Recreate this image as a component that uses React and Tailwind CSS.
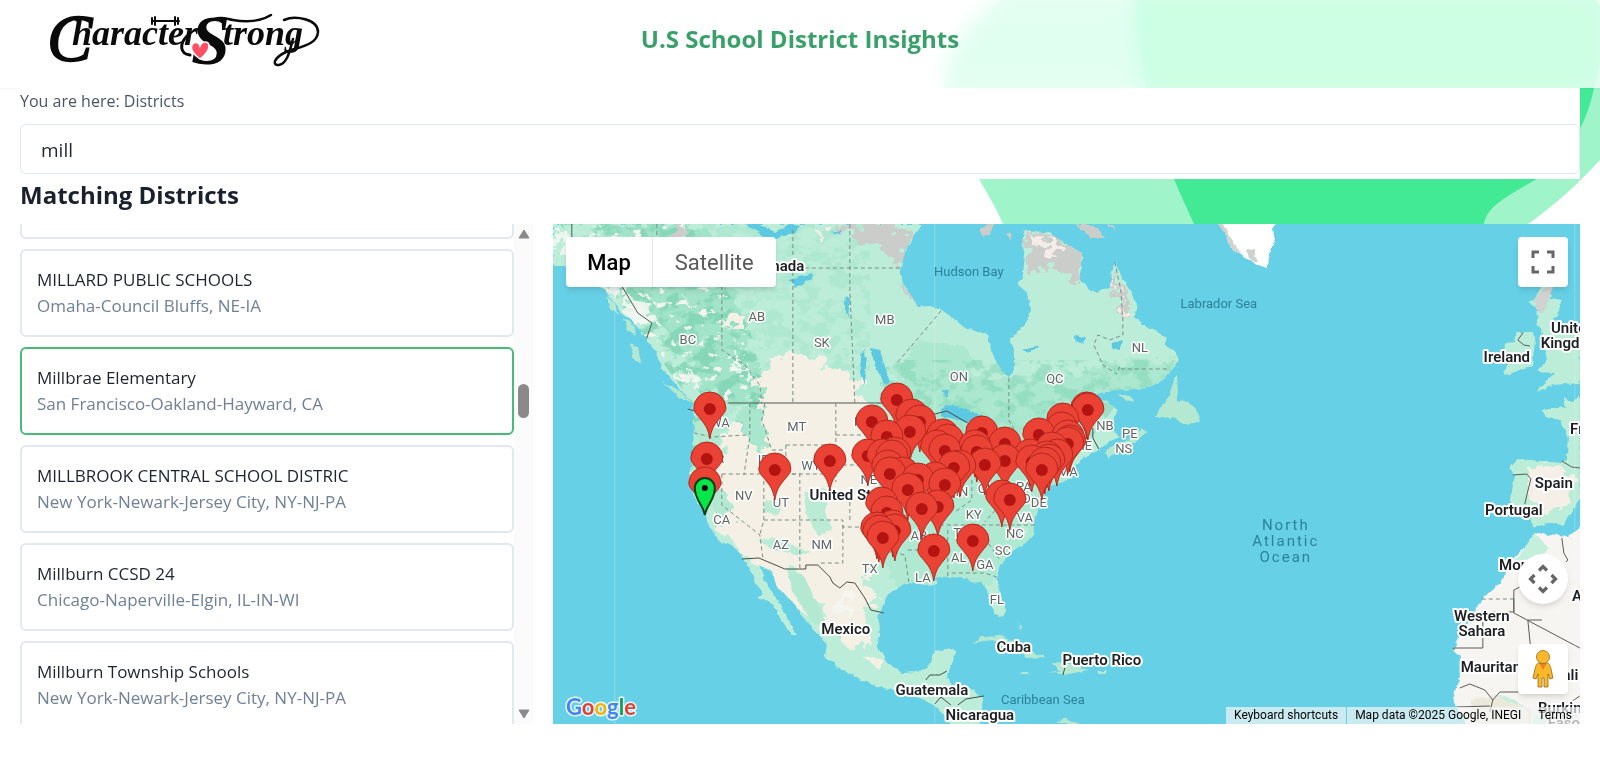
import React from "react";

const districts = [
  { name: "MILLARD PUBLIC SCHOOLS", area: "Omaha-Council Bluffs, NE-IA" },
  { name: "Millbrae Elementary", area: "San Francisco-Oakland-Hayward, CA", selected: true },
  { name: "MILLBROOK CENTRAL SCHOOL DISTRIC", area: "New York-Newark-Jersey City, NY-NJ-PA" },
  { name: "Millburn CCSD 24", area: "Chicago-Naperville-Elgin, IL-IN-WI" },
  { name: "Millburn Township Schools", area: "New York-Newark-Jersey City, NY-NJ-PA" },
];

/* Pin positions: centre of the pin's head. */
const pins = [
  [710, 408], [707, 458], [705, 483], [775, 469], [830, 460],
  [897, 399], [912, 415], [920, 421], [872, 421], [910, 431], [887, 436], [868, 455],
  [943, 435], [948, 440], [937, 446], [945, 450], [982, 432], [1005, 443], [975, 446],
  [977, 451], [1005, 460], [985, 464], [954, 467], [960, 466], [945, 484], [935, 478],
  [883, 455], [892, 456], [895, 453], [888, 466], [903, 473], [890, 473], [918, 479],
  [908, 489], [938, 506], [922, 508], [882, 503], [887, 512], [877, 528], [879, 531],
  [895, 530], [893, 526], [883, 537], [934, 550], [973, 540], [1002, 496], [1010, 499],
  [1087, 408], [1088, 409], [1063, 419], [1062, 428], [1039, 434], [1068, 436], [1070, 441],
  [1068, 443], [1052, 448], [1057, 455], [1030, 455], [1032, 461], [1047, 457], [1049, 460],
  [1045, 463], [1042, 469],
].sort((a, b) => a[1] - b[1]);

const states = [
  ["AB", 757, 316], ["BC", 688, 339], ["MB", 885, 319], ["SK", 822, 342], ["ON", 959, 376],
  ["QC", 1055, 378], ["NL", 1140, 347], ["NB", 1105, 425], ["PE", 1130, 433], ["NS", 1124, 448],
  ["MT", 797, 426], ["WA", 720, 422], ["OR", 716, 458], ["ID", 764, 459], ["WY", 811, 465],
  ["NV", 744, 495], ["UT", 781, 502], ["CA", 722, 519], ["AZ", 781, 544], ["NM", 822, 544],
  ["TX", 870, 568], ["ND", 863, 421], ["NE", 869, 479], ["KY", 974, 514], ["TN", 962, 532],
  ["NC", 1015, 533], ["VA", 1025, 517], ["SC", 1003, 550], ["AL", 959, 557], ["GA", 985, 564],
  ["LA", 923, 577], ["FL", 997, 599], ["DE", 1039, 502], ["AR", 919, 535], ["PA", 1024, 486],
  ["MD", 1021, 498], ["MA", 1068, 471], ["ME", 1083, 445], ["IN", 962, 491], ["OH", 987, 488],
];

const countries = [
  ["Canada", 779, 266], ["United States", 855, 495], ["Mexico", 846, 629], ["Guatemala", 932, 690],
  ["Nicaragua", 980, 715], ["Cuba", 1014, 647], ["Puerto Rico", 1102, 660], ["Ireland", 1507, 357],
  ["United", 1573, 328], ["Kingdom", 1571, 343], ["France", 1593, 429], ["Spain", 1554, 483],
  ["Portugal", 1514, 510], ["Morocco", 1529, 565], ["Western", 1482, 616], ["Sahara", 1482, 631],
  ["Algeria", 1596, 596], ["Mauritania", 1497, 667], ["Mali", 1564, 675], ["Burkina", 1564, 708],
  ["Faso", 1564, 723],
];

const seas = [["Hudson Bay", 969, 271], ["Labrador Sea", 1219, 303], ["Caribbean Sea", 1043, 699]];

const northAmerica =
  "M553 224V266L565 266L600 287L608 293L614 303L622 312L632 320L642 333L650 343L655 352L662 368L672 380L682 391L693 404L694 417L694 437L693 453L690 473L690 487L697 500L705 515L710 527L718 540L732 545L742 555L750 570L758 587L763 593L758 598L772 603L780 618L792 635L797 635L793 627L787 618L780 603L773 593L765 580L759 565L772 570L777 587L788 597L797 607L803 617L817 633L827 645L825 657L840 668L857 678L877 687L900 691L920 698L937 707L950 723L955 730H980L982 710L983 698L970 688L950 685L947 677L952 663L958 650L955 648L937 650L932 657L928 668L917 672L903 673L887 663L878 647L880 627L878 617L883 607L887 595L903 585L910 582L925 585L937 584L935 578L950 577L967 578L972 582L982 583L987 590L990 603L995 613L1000 618L1005 617L1005 605L1000 590L997 577L1000 565L1013 550L1027 542L1035 533L1033 525L1038 510L1043 500L1048 487L1063 482L1073 477L1077 465L1083 458L1100 448L1113 440L1120 437L1110 427L1118 410L1108 402L1100 400L1086 402L1082 406L1090 396L1100 393L1120 390L1147 388L1160 382L1172 370L1178 360L1177 352L1165 345L1167 337L1148 328L1135 317L1137 303L1130 290L1123 280L1119 270L1115 262L1112 273L1110 287L1095 292L1088 287L1080 280L1082 253L1063 242L1050 233L1025 230L1022 238L1025 257L1023 275L1018 285L1026 291L1030 300L1030 317L1018 333L1010 338L1015 353L1015 370L1008 378L997 363L990 347L988 335L967 328L942 310L930 306L918 307L913 298L903 283L900 270L907 247L920 228L922 224Z";
const islands =
  "M1105 453L1108 459L1120 450L1133 443L1147 433L1143 427L1130 440L1115 444ZM1177 375L1168 397L1155 417L1173 418L1190 425L1200 422L1198 413L1190 402L1177 400L1178 390ZM1117 394L1130 396L1136 402L1124 400ZM973 643L983 637L1000 636L1017 643L1033 652L1047 657L1027 658L1020 650L997 640L983 641ZM1047 671L1060 672L1053 662L1070 663L1088 670L1065 675ZM1020 673L1026 671L1032 673L1026 675ZM1097 671L1107 671L1106 674L1098 674ZM1018 620L1023 628L1021 630ZM1057 724L1065 717L1070 720L1080 724ZM630 344L638 347L642 366L634 358ZM606 295L614 303L618 316L610 308ZM624 318L634 326L636 335L628 330ZM663 382L678 389L692 403L680 398Z";
const arcticIslands =
  "M1075 224L1092 238L1105 238L1098 228L1088 224ZM980 230L988 224H994L990 234L983 236ZM1006 234L1011 232L1010 240ZM1108 224L1117 232L1113 224Z";
const europe =
  "M1505 343L1515 342L1517 332L1533 332L1535 343L1532 367L1505 375L1503 370L1510 363L1505 357ZM1542 286L1553 286L1550 298L1562 300L1557 317L1550 323L1566 326L1580 333V383L1553 385L1537 392L1547 380L1555 373L1538 372L1547 360L1545 347L1542 333L1537 323L1538 310L1530 303L1535 298ZM1580 395L1573 402L1563 397L1565 407L1542 410L1545 416L1560 420L1568 437L1567 460L1562 463L1517 459L1510 467L1515 477L1510 500L1514 514L1530 517L1533 527L1553 523L1563 525L1573 510L1580 500Z";
const africa =
  "M1590 527L1580 527L1568 537L1547 535L1535 532L1530 542L1520 552L1507 565L1505 578L1483 598L1470 620L1460 636L1453 650L1460 657L1460 677L1453 697L1457 707L1470 730H1590Z";

const pinPath = "M0 30C-1.500 20 -4.500 16 -8.500 11C-12.500 6 -16 3 -16 -1A16 16 0 0 1 16 -1C16 3 12.500 6 8.500 11C4.500 16 1.500 20 0 30Z";

function Logo() {
  return (
    <svg viewBox="0 0 280 64" className="h-16 w-[280px] overflow-visible" role="img" aria-label="Character Strong">
      <g fill="#0a0a0a" fontFamily="'Liberation Serif', serif" fontStyle="italic" fontWeight="700">
        <text x="2" y="54" fontSize="68" fontWeight="400" stroke="#0a0a0a" strokeWidth="1.500">C</text>
        <text x="27" y="38" fontSize="36">haracter</text>
        <text x="146" y="57" fontSize="70">S</text>
        <text x="178" y="38" fontSize="36">trong</text>
      </g>
      <g fill="none" stroke="#0a0a0a" strokeLinecap="round">
        <path d="M107 14H134" strokeWidth="2" />
        <path d="M107 11V17M110 10V18M130 10V18M133 11V17" strokeWidth="2" />
        <path d="M170 12C176 9 182 12 188 13C204 16 216 14 226 8" strokeWidth="2.500" />
        <path d="M239 13C250 8 273 12 273 25C272 39 252 40 241 45C228 51 227 59 234 58C243 56 245 42 248 32" strokeWidth="2.500" />
        <path d="M142 29C134 37 135 47 145 48" strokeWidth="3" />
      </g>
      <path d="M155 52C148 47 145 42 147 38C149 34 154 35 155 39C157 34 163 34 164 38C165 43 160 48 155 52Z" fill="#ff4f64" stroke="#fff" strokeWidth="1.500" />
    </svg>
  );
}

function Backdrop() {
  return (
    <svg viewBox="0 0 700 300" className="absolute top-0 right-0 h-[300px] w-[700px]" aria-hidden="true">
      <path d="M150 -20C80 0 45 40 44 88C47 120 66 155 79 179C90 198 98 212 103 224L120 300H560C590 270 600 250 628 224C655 205 680 182 700 160V-20Z" fill="#9ff4ca" />
      <path d="M236 -20C232 40 245 92 274 179C280 194 288 210 294 224L310 300H570L584 224C587 208 600 200 637 179C660 165 686 130 694 88C698 70 700 66 700 60V6L680 -20Z" fill="#43ea95" />
    </svg>
  );
}

function MapDrawing() {
  return (
    <svg viewBox="553 224 1027 500" preserveAspectRatio="xMidYMid slice" className="absolute inset-0 h-full w-full" role="img" aria-label="Map of matching districts">
      <defs>
        <filter id="ragged" x="-5%" y="-5%" width="110%" height="110%">
          <feTurbulence type="fractalNoise" baseFrequency="0.15" numOctaves="2" seed="4" result="n" />
          <feDisplacementMap in="SourceGraphic" in2="n" scale="5" xChannelSelector="R" yChannelSelector="G" />
        </filter>
        <filter id="torn" x="-5%" y="-5%" width="110%" height="110%">
          <feTurbulence type="fractalNoise" baseFrequency="0.07 0.09" numOctaves="3" seed="9" result="n" />
          <feDisplacementMap in="SourceGraphic" in2="n" scale="34" xChannelSelector="R" yChannelSelector="G" />
        </filter>
        <filter id="forest" x="0" y="0" width="100%" height="100%" colorInterpolationFilters="sRGB">
          <feTurbulence type="fractalNoise" baseFrequency="0.06 0.08" numOctaves="4" seed="21" />
          <feColorMatrix values="0 0 0 0 0.5  0 0 0 0 0.83  0 0 0 0 0.71  8 0 0 0 -3.8" result="c" />
          <feComposite in="c" in2="SourceGraphic" operator="in" />
        </filter>
        <filter id="clearing" x="0" y="0" width="100%" height="100%" colorInterpolationFilters="sRGB">
          <feTurbulence type="fractalNoise" baseFrequency="0.09 0.12" numOctaves="4" seed="5" />
          <feColorMatrix values="0 0 0 0 0.96  0 0 0 0 0.96  0 0 0 0 0.94  12 0 0 0 -7.6" result="c" />
          <feComposite in="c" in2="SourceGraphic" operator="in" />
        </filter>
        <clipPath id="land"><path d={northAmerica} /></clipPath>
        <clipPath id="landEurope"><path d={europe} /></clipPath>
      </defs>
      <rect x="553" y="224" width="1027" height="500" fill="#66d0e6" />
      <g filter="url(#ragged)">
        <path d={northAmerica} fill="#bbedd8" />
        <path d={islands} fill="#b4e8d0" />
        <path d={arcticIslands} fill="#cbcdca" />
        <path d={europe} fill="#bbedd8" />
        <path d={africa} fill="#f7f5f2" />
        <path d="M1218 220L1225 233L1230 248L1240 253L1253 263L1267 268L1268 257L1275 240L1273 228L1278 220Z" fill="#ffffff" />
        <path d="M1218 224L1225 233L1230 248L1240 253L1238 247L1231 238L1224 224ZM1246 251L1253 249L1258 262L1252 262Z" fill="#cfd3cf" />
      </g>
      <g clipPath="url(#land)">
        <path d="M600 224H700L735 300L762 380L765 402H725L690 370L655 320Z" fill="#8fdcbd" opacity=".55" filter="url(#torn)" />
        <path d="M560 224H690L750 330L768 403L770 470L735 440L690 480V400L640 330Z" fill="#bbedd8" opacity=".8" filter="url(#forest)" />
        <path d="M690 224H870V370H760L740 320Z" fill="#bbedd8" opacity=".22" filter="url(#forest)" />
        <path d="M560 224H700L760 380V400H700L640 330Z" fill="#bbedd8" filter="url(#clearing)" />
        <path d="M895 380L920 335L965 350L985 380H1010L1100 370L1178 358V390L1100 400L1060 420L960 440L900 420Z" fill="#9fe4c8" opacity=".55" filter="url(#torn)" />
        <path d="M880 360H1178V400H1120L1090 440H880Z" fill="#bbedd8" opacity=".5" filter="url(#forest)" />
        <path d="M870 420L1090 410L1060 480L1000 580L890 590Z" fill="#a9e6ce" opacity=".6" filter="url(#torn)" />
        <path d="M765 370L790 350L850 375L868 405L876 420L875 500L888 545L868 580L880 606L855 612L868 650L850 645L825 625L800 570L772 575L740 552L712 515L716 470L735 415L748 445L772 440L758 405Z" fill="#f4f0e5" filter="url(#torn)" />
        <path d="M735 500L765 500L830 505L860 520L870 560L850 580L825 575L800 566L755 562L738 548L722 525Z" fill="#f4f0e5" />
        <path d="M764 565L785 565L798 600L815 620L806 615L780 590ZM850 600L862 605L872 645L856 632ZM862 655L884 660L880 670Z" fill="#f4f0e5" filter="url(#ragged)" />
        <path d="M788 570L804 575L815 600L828 628L812 622L792 590Z" fill="#b3e9d1" filter="url(#ragged)" />
        <path d="M700 402H735L715 470L735 520L728 525L702 500L690 470Z" fill="#b3e9d1" filter="url(#torn)" />
        <path d="M805 492L830 488L825 512L832 530L818 535L806 515ZM758 540L775 538L810 552L800 556L770 548ZM765 500L782 505L778 516L764 512Z" fill="#b9ebd5" filter="url(#ragged)" />
        <path d="M735 410L760 405L770 430L765 450L752 448L745 430Z" fill="#a9e6ce" filter="url(#torn)" />
        <path d="M722 318L745 314L744 328L728 328Z" fill="#f4f0e5" filter="url(#torn)" />
        <path d="M830 224H875L908 228L915 245L902 268L896 262L875 245L850 238ZM1022 228L1065 240L1085 253L1082 282L1070 275L1050 265L1030 272ZM1112 262L1122 282L1132 305L1124 318L1115 300L1111 282ZM670 224H695L690 238H676ZM903 282L914 296L914 306L904 292Z" fill="#cbcdca" filter="url(#torn)" />
        <path d="M1028 235L1046 238L1066 252L1050 254L1036 248ZM815 224L826 228L822 236ZM1113 275L1118 286L1115 292ZM1122 296L1128 312L1121 312Z" fill="#f4ece6" filter="url(#torn)" />
        <path d="M553 240L580 262L600 285L616 294L622 320L645 325L654 320L648 308L630 300L618 286L590 250L553 232ZM675 370L700 378L702 390L682 382ZM732 356L748 372L760 385L750 380L734 366ZM684 290L694 302L688 300ZM840 595L850 605L845 618L838 608Z" fill="#f6f7f4" opacity=".85" filter="url(#torn)" />
        <path d="M745 224L770 240L795 233L800 226L790 224L775 232L760 224ZM790 280L812 273L812 278L795 288ZM870 348L880 350L890 382L886 385L876 368ZM862 350L867 358L864 384L860 372ZM846 296L850 300L848 318L845 308ZM830 232L842 230L840 234ZM1075 335L1086 337L1083 345L1076 342ZM1112 343L1122 340L1120 350L1112 348ZM940 408L950 404L965 408L985 418L968 422L942 416ZM920 415L936 418L935 424ZM1022 350L1040 346L1030 352ZM942 390L950 391L946 398ZM990 460L1012 458L1010 464L995 466Z" fill="#5cc8e2" filter="url(#ragged)" />
      </g>
      <g clipPath="url(#landEurope)">
        <path d="M1528 468L1560 464L1575 478L1568 500L1550 512L1530 500Z" fill="#f4f0e8" filter="url(#torn)" />
        <path d="M1534 298L1548 286L1554 288L1544 312L1536 312Z" fill="#d0d3cf" filter="url(#ragged)" />
      </g>
      <path d="M1535 533L1549 548L1545 553L1525 560L1510 566L1522 552ZM1498 696L1516 700L1530 710L1560 706L1578 712V724H1500Z" fill="#c4efdc" filter="url(#ragged)" />
      <path d="M1470 700L1495 696L1540 712L1530 724H1475Z" fill="#ebe9dc" filter="url(#ragged)" />
      <g fill="none" stroke="#6f7f79" strokeWidth="1">
        <path d="M572 224V250M728 403H877M622 286L638 313L652 323L647 338M688 409L695 411" stroke="#4c5a56" />
        <path d="M877 403H905L935 414L947 411L968 423M1093 428L1093 438L1099 449" stroke="#3f4d4a" />
        <path d="M742 559L759 558L785 569H806V565H818L830 577L833 583L840 588L847 582L855 583L865 598L871 610L884 613" stroke="#4c4c48" />
        <path d="M926 680L930 675H940L947 671M935 704L941 697L951 705M958 705L966 699L984 696M1065 668L1063 675" stroke="#3f4d4a" />
        <path d="M1523 333L1518 340L1524 345L1530 346M1513 475L1527 474L1531 479L1527 495L1525 504M1562 461L1572 467L1580 468M1562 538L1564 553L1568 560L1566 562M1514 598V613L1580 648M1528 620H1542M1528 620L1531 650M1454 650V648L1483 648V620H1490V612H1514V590L1520 587M1460 688L1470 684L1485 690L1493 700L1500 692L1520 692M1493 700L1490 712M1562 708L1580 696M1457 707L1490 706" stroke="#5b5b58" />
        <g strokeDasharray="4 3" stroke="#7d8c86">
          <path d="M722 286V350L745 365L760 385L762 403M793 230V403M850 224V290L855 403M657 224V240M805 268H902M898 362L942 310M1009 378V420L1020 440" />
          <path d="M1115 262L1121 290L1123 320L1123 335L1110 340L1098 335L1094 345L1103 365L1117 374L1120 366L1122 369H1170" />
          <path d="M750 403V437L744 475M694 433L712 437L746 435M722 474H830M722 474V505L760 535L763 558M764 474V520L760 535M836 403V482M786 445H836M786 445V474L800 474V568M764 520H843V527H860M843 525V563H818M765 403L762 420L772 450L786 450M836 435H870M836 465H868M850 488V520" />
          <path d="M880 550L905 555L909 582M948 530V577M952 573H985L997 577M972 480V500L955 512M940 525H1036M985 538L1000 560M908 550H935M1000 505L985 522M1482 599H1514" />
        </g>
      </g>
      <path d="M615 224V724M935 224V724M1575 224V724" stroke="#fff" strokeOpacity=".25" />
      <g textAnchor="middle" fontFamily="Roboto, sans-serif" paintOrder="stroke" strokeLinejoin="round">
        <g fontSize="13" fill="#5f6664" stroke="#fff" strokeWidth="3">
          {states.map(([t, x, y]) => <text key={t} x={x} y={y + 5}>{t}</text>)}
        </g>
        <g fontSize="15" fontWeight="600" fill="#1d2022" stroke="#fff" strokeWidth="4">
          {countries.map(([t, x, y]) => <text key={t} x={x} y={y + 5}>{t}</text>)}
        </g>
        <g fontSize="13" fill="#2b8299">
          {seas.map(([t, x, y]) => <text key={t} x={x} y={y + 5}>{t}</text>)}
        </g>
        <g fontSize="15" fill="#2b8299" className="tracking-[2px]">
          <text x="1286" y="530">North</text>
          <text x="1286" y="546">Atlantic</text>
          <text x="1286" y="562">Ocean</text>
        </g>
      </g>
      {pins.map(([x, y], i) => (
        <g key={i} transform={`translate(${x} ${y + 1})`}>
          <path d={pinPath} fill="#ea4335" stroke="#b3261c" strokeWidth="1" />
          <circle r="6" fill="#b31412" />
        </g>
      ))}
      <path d="M705 515C703 504 695 500 695 488A10 10 0 0 1 715 488C715 500 707 504 705 515Z" fill="#05e64b" stroke="#0b3d16" strokeWidth="2" />
      <circle cx="705" cy="488" r="3" fill="#000" />
    </svg>
  );
}

function MapPanel() {
  return (
    <section className="relative h-[500px] overflow-hidden bg-[#66d0e6] font-[Roboto,sans-serif]" aria-label="Map">
      <MapDrawing />
      <div className="absolute top-[13px] left-[13px] flex h-[50px] rounded-sm bg-white text-[22px] shadow-md">
        <button type="button" className="border-r border-gray-200 px-[21px] font-medium text-black">Map</button>
        <button type="button" className="px-[22px] text-[#5a5a5a]">Satellite</button>
      </div>
      <button type="button" aria-label="Toggle fullscreen" className="absolute top-[13px] right-3 flex size-[50px] items-center justify-center rounded-sm bg-white shadow-md">
        <svg viewBox="0 0 24 24" className="size-6" fill="none" stroke="#666" strokeWidth="3">
          <path d="M2 8V2H8M16 2H22V8M22 16V22H16M8 22H2V16" />
        </svg>
      </button>
      <div className="absolute right-3 bottom-[30px] flex flex-col gap-10">
        <button type="button" aria-label="Map camera controls" className="flex size-[50px] items-center justify-center rounded-full bg-white shadow-md">
          <svg viewBox="0 0 30 30" className="size-[30px]" fill="none" stroke="#666" strokeWidth="3.200">
            <path d="M11 6.500L15 2.500L19 6.500M11 23.500L15 27.500L19 23.500M6.500 11L2.500 15L6.500 19M23.500 11L27.500 15L23.500 19" />
          </svg>
        </button>
        <button type="button" aria-label="Street View" className="flex size-[50px] items-center justify-center rounded-sm bg-white shadow-md">
          <svg viewBox="0 0 24 40" className="h-10 w-6">
            <path d="M8 14H16C18 14 19 16 20 20L22 29L19 30L17 25V38H13V29H11V38H7V25L5 30L2 29L4 20C5 16 6 14 8 14Z" fill="#fbb829" stroke="#8d6a1c" strokeWidth=".8" />
            <path d="M8 14L12 21L16 14Z" fill="#e5832a" />
            <circle cx="12" cy="8" r="6.500" fill="#fbb829" stroke="#8d6a1c" strokeWidth=".8" />
          </svg>
        </button>
      </div>
      <svg viewBox="0 0 76 32" className="absolute bottom-0 left-[11px] h-8 w-[76px]" role="img" aria-label="Google">
        <text x="2" y="23" fontFamily="Lato, sans-serif" fontSize="22" fontWeight="700" stroke="#e8f6fa" strokeWidth="3" paintOrder="stroke" strokeLinejoin="round">
          <tspan fill="#4285f4">G</tspan><tspan fill="#db4437">o</tspan><tspan fill="#f4b400">o</tspan><tspan fill="#4285f4">g</tspan><tspan fill="#0f9d58">l</tspan><tspan fill="#db4437">e</tspan>
        </text>
      </svg>
      <div className="absolute right-0 bottom-0 flex h-[17px] items-center gap-px text-xs leading-[17px] text-black">
        <button type="button" className="h-full bg-[#f5f5f5]/70 px-2">Keyboard shortcuts</button>
        <span className="h-full bg-[#f5f5f5]/70 px-2">Map data ©2025 Google, INEGI</span>
        <a href="#terms" className="h-full bg-[#f5f5f5]/70 px-2">Terms</a>
      </div>
    </section>
  );
}

function DistrictList() {
  return (
    <div className="flex h-[500px] overflow-hidden">
      <ul className="flex min-w-0 flex-1 flex-col gap-[10px]">
        <li className="h-[15px] shrink-0 rounded-b-md border-2 border-t-0 border-[#e2e8f0] bg-white" />
        {districts.map((d) => (
          <li key={d.name} className="shrink-0">
            <button
              type="button"
              className={`flex h-[88px] w-full flex-col justify-center rounded-md border-2 bg-white px-[15px] text-left text-[17px] leading-[26px] ${d.selected ? "border-[#48bb78]" : "border-[#e2e8f0]"}`}
            >
              <span className="text-[#1f2430]">{d.name}</span>
              <span className="text-[#718096]">{d.area}</span>
            </button>
          </li>
        ))}
      </ul>
      <div className="flex w-[19px] flex-col items-center justify-between bg-[#fbfbfb] py-[5px]" aria-hidden="true">
        <svg viewBox="0 0 12 10" className="h-[10px] w-3"><path d="M6 1L11 9H1Z" fill="#8a8a8a" stroke="#8a8a8a" strokeLinejoin="round" /></svg>
        <div className="mt-[145px] mb-auto h-[34px] w-[11px] rounded-full bg-[#8a8a8a]" />
        <svg viewBox="0 0 12 10" className="h-[10px] w-3"><path d="M6 9L11 1H1Z" fill="#8a8a8a" stroke="#8a8a8a" strokeLinejoin="round" /></svg>
      </div>
    </div>
  );
}

export default function App() {
  return (
    <div className="relative min-h-screen overflow-hidden bg-white font-['Open_Sans','Noto_Sans',sans-serif]">
      <Backdrop />
      <header className="relative grid h-[88px] grid-cols-3 items-center bg-white/80 px-[45px] pb-[10px] shadow-xs backdrop-blur-[10px] backdrop-saturate-[180%]">
        <Logo />
        <h1 className="text-center text-2xl font-bold whitespace-nowrap text-[#38a169]">U.S School District Insights</h1>
      </header>
      <main className="relative px-5">
        <div className="bg-white pb-[5px]">
          <p className="h-9 text-base leading-[26px] text-[#4a5568]">You are here: Districts</p>
          <input
            type="text"
            aria-label="Search districts"
            defaultValue="mill"
            className="block h-[50px] w-full rounded-md border border-[#e2e8f0] bg-white px-5 pt-[2px] text-[19px] text-[#1f2430] outline-none"
          />
        </div>
        <h2 className="h-[45px] text-2xl leading-8 font-bold text-[#1a202c]">Matching Districts</h2>
        <div className="grid grid-cols-[1fr_2fr] gap-5">
          <DistrictList />
          <MapPanel />
        </div>
      </main>
    </div>
  );
}
